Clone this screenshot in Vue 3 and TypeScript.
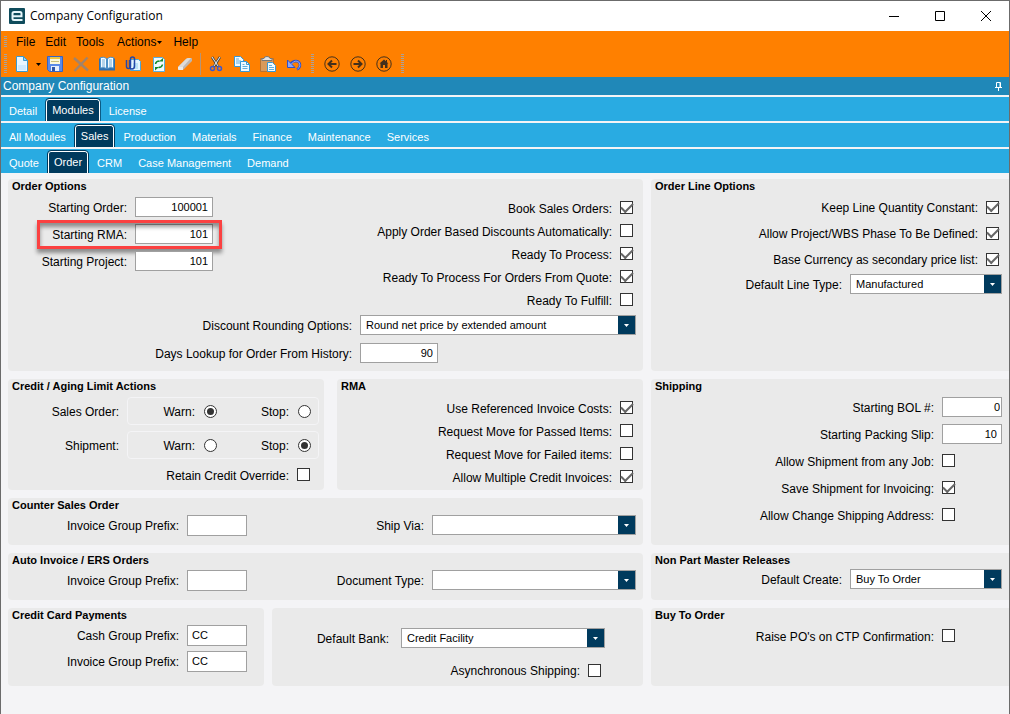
<script setup lang="ts">
import { ref, reactive } from 'vue'

interface Check {
  id: string
  label: string
  on: boolean
}

interface TabRow {
  name: string
  tabs: string[]
  active: string
}

const tabRows = reactive<TabRow[]>([
  { name: 'Section', tabs: ['Detail', 'Modules', 'License'], active: 'Modules' },
  {
    name: 'Module',
    tabs: ['All Modules', 'Sales', 'Production', 'Materials', 'Finance', 'Maintenance', 'Services'],
    active: 'Sales',
  },
  {
    name: 'Sales area',
    tabs: ['Quote', 'Order', 'CRM', 'Case Management', 'Demand'],
    active: 'Order',
  },
])

const starting = reactive([
  { id: 'start-order', label: 'Starting Order:', value: '100001', marked: false },
  { id: 'start-rma', label: 'Starting RMA:', value: '101', marked: true },
  { id: 'start-project', label: 'Starting Project:', value: '101', marked: false },
])

const orderChecks = reactive<Check[]>([
  { id: 'book', label: 'Book Sales Orders:', on: true },
  { id: 'discounts', label: 'Apply Order Based Discounts Automatically:', on: false },
  { id: 'ready', label: 'Ready To Process:', on: true },
  { id: 'ready-quote', label: 'Ready To Process For Orders From Quote:', on: true },
  { id: 'fulfill', label: 'Ready To Fulfill:', on: false },
])

const lineChecks = reactive<Check[]>([
  { id: 'quantity', label: 'Keep Line Quantity Constant:', on: true },
  { id: 'wbs', label: 'Allow Project/WBS Phase To Be Defined:', on: true },
  { id: 'currency', label: 'Base Currency as secondary price list:', on: true },
])

const rmaChecks = reactive<Check[]>([
  { id: 'costs', label: 'Use Referenced Invoice Costs:', on: true },
  { id: 'passed', label: 'Request Move for Passed Items:', on: false },
  { id: 'failed', label: 'Request Move for Failed items:', on: false },
  { id: 'multiple', label: 'Allow Multiple Credit Invoices:', on: true },
])

const shipChecks = reactive<Check[]>([
  { id: 'any-job', label: 'Allow Shipment from any Job:', on: false },
  { id: 'save-ship', label: 'Save Shipment for Invoicing:', on: true },
  { id: 'ship-address', label: 'Allow Change Shipping Address:', on: false },
])

const limits = reactive([
  { id: 'limit-order', label: 'Sales Order:', value: 'Warn' },
  { id: 'limit-shipment', label: 'Shipment:', value: 'Stop' },
])

const rounding = ref('Round net price by extended amount')
const daysLookup = ref('90')
const lineType = ref('Manufactured')
const bol = ref('0')
const packingSlip = ref('10')
const counterPrefix = ref('')
const shipVia = ref('')
const autoPrefix = ref('')
const documentType = ref('')
const defaultCreate = ref('Buy To Order')
const cashPrefix = ref('CC')
const invoicePrefix = ref('CC')
const bank = ref('Credit Facility')
const asynchronous = ref(false)
const retain = ref(false)
const raisePo = ref(false)
</script>

<template>
  <div class="window">
    <header class="titlebar">
      <svg class="logo" viewBox="0 0 16 16" aria-hidden="true">
        <rect width="16" height="16" rx="1" fill="#0f4c5c" />
        <path d="M13.500 12H5Q3.500 12 3.500 10.500v-5Q3.500 4 5 4h6q1.500 0 1.500 1.500V8.300H4" fill="none" stroke="#e6f6fa" stroke-width="2" />
      </svg>
      <h1>Company Configuration</h1>
      <div class="window-buttons">
        <button type="button" aria-label="Minimize">
          <svg viewBox="0 0 12 12"><path d="M1 6.5h10" /></svg>
        </button>
        <button type="button" aria-label="Maximize">
          <svg viewBox="0 0 12 12"><path d="M1.5 1.5h9v9h-9z" /></svg>
        </button>
        <button type="button" aria-label="Close">
          <svg viewBox="0 0 12 12"><path d="M1 1l10 10M11 1L1 11" /></svg>
        </button>
      </div>
    </header>

    <div class="commands">
      <nav class="menu" aria-label="Menu">
        <i class="grip"></i>
        <button type="button">File</button>
        <button type="button">Edit</button>
        <button type="button">Tools</button>
        <button type="button" class="with-caret">Actions<svg class="menu-caret" viewBox="0 0 5 3"><path d="M0 0h5L2.500 3z" /></svg></button>
        <button type="button">Help</button>
      </nav>
      <div class="toolbar" role="toolbar" aria-label="Standard">
        <i class="grip tall"></i>
        <button type="button" class="new" aria-label="New">
          <svg viewBox="0 0 16 16"><path d="M2.500 .5h7l4 4v11h-11z" fill="#e9f6ff" stroke="#3a9ad0" /><path d="M9.500 .5v4h4z" fill="#9fd2f2" stroke="#3a9ad0" /><path d="M4 9h8v5H4z" fill="#cfeaff" /></svg>
        </button>
        <button type="button" class="drop" aria-label="New options">
          <svg class="menu-caret" viewBox="0 0 5 3"><path d="M0 0h5L2.500 3z" /></svg>
        </button>
        <button type="button" aria-label="Save">
          <svg viewBox="0 0 16 16"><path d="M.5 .5h15v15h-13l-2-2z" fill="#5b8ae8" stroke="#3763c4" /><path d="M3 1h10v7H3z" fill="#fbf8dc" /><path d="M3 1h10v2H3z" fill="#f0c63c" /><path d="M4 5.500h8" stroke="#c9bf7c" /><path d="M4 10h8v5H4z" fill="#e8effb" /><path d="M5 11h3v4H5z" fill="#3156a6" /></svg>
        </button>
        <button type="button" aria-label="Delete">
          <svg viewBox="0 0 16 16"><path d="M1 2l14 12.500M14.500 1.500L1.500 15" fill="none" stroke="#a2836a" stroke-width="2.500" /></svg>
        </button>
        <button type="button" aria-label="Search">
          <svg viewBox="0 0 16 16"><path d="M0 2.500h16v12H0z" fill="#2f6fae" /><path d="M1.500 1.500Q5 .5 7.500 2.500v10Q5 11 1.500 12zM14.500 1.500Q11 .5 8.500 2.500v10Q11 11 14.500 12z" fill="#f4fbff" stroke="#4b91c8" /><path d="M3 4h3M3 6h3M3 8h3M3 10h3M10 4h3M10 6h3M10 8h3M10 10h3" stroke="#73acd6" /></svg>
        </button>
        <button type="button" aria-label="Attachments">
          <svg viewBox="0 0 16 16"><path d="M5.500 3.500h8l2 2v9h-10z" fill="#e4f5ff" stroke="#4ba7d8" /><path d="M8 8h5M8 10h5M8 12h5" stroke="#93cdec" /><path d="M1.500 4v6.500q0 2 2 2t2-2V3q0-2 2-2t2 2v7q0 3-2.500 3T4.500 10V4" fill="none" stroke="#2447a8" stroke-width="1.500" /></svg>
        </button>
        <button type="button" aria-label="Refresh">
          <svg viewBox="0 0 16 16"><path d="M2.500 1.500h9l2 2v12h-11z" fill="#f1faff" stroke="#5aaede" /><path d="M4.500 8Q5 5 8.500 5" fill="none" stroke="#128a2c" stroke-width="1.500" /><path d="M8 5.500h4v-3.500z" fill="#128a2c" /><path d="M11.500 8.500Q11 11.500 7.500 11.500" fill="none" stroke="#128a2c" stroke-width="1.500" /><path d="M8 11H4v3.500z" fill="#128a2c" /></svg>
        </button>
        <button type="button" aria-label="Clear">
          <svg viewBox="0 0 16 16"><path d="M1 11l8-8q1-1 2.500-1H14q1 0 1 1v2L7 13q-1 1-2 1H2q-1 0-1-1z" fill="#bdb6b0" /><path d="M1 11l8-8q1-1 2.500-1H14L6 11z" fill="#dedbd8" /><path d="M1 11h5v3H2q-1 0-1-1z" fill="#eceae8" /></svg>
        </button>
        <i class="divider"></i>
        <button type="button" aria-label="Cut">
          <svg viewBox="0 0 16 16"><path d="M4 1l6 9.500M12 1L6 10.500" fill="none" stroke="#4a4a4a" stroke-width="2.500" /><path d="M4 1l6 9M12 1L6 10" fill="none" stroke="#e9edf2" /><ellipse cx="4.500" cy="12.500" rx="2" ry="2" fill="#ff8000" stroke="#3a58d0" stroke-width="1.500" /><ellipse cx="11.500" cy="12.500" rx="2" ry="2" fill="#ff8000" stroke="#3a58d0" stroke-width="1.500" /></svg>
        </button>
        <button type="button" aria-label="Copy">
          <svg viewBox="0 0 16 16"><path d="M.5 .5h6l3 3v7h-9z" fill="#f1faff" stroke="#3898d4" /><path d="M2 3h3M2 5h5M2 7h5" stroke="#61aede" /><path d="M6.500 5.500h6l3 3v7h-9z" fill="#f1faff" stroke="#3898d4" /><path d="M12.500 5.500v3h3" fill="none" stroke="#3898d4" /><path d="M8.500 8.500h2M8.500 10.500h5M8.500 12.500h5" stroke="#61aede" /></svg>
        </button>
        <button type="button" aria-label="Paste">
          <svg viewBox="0 0 16 16"><path d="M.5 2.500h13v13H.5z" fill="#d99a5c" stroke="#b87333" /><path d="M2 4.500h10v-2h-2q0-2-3-2t-3 2H2z" fill="#e3e3e3" stroke="#777" /><path d="M7.500 6.500h5l3 3v6h-8z" fill="#f1faff" stroke="#3898d4" /><path d="M9 9.500h3M9 11.500h5M9 13.500h5" stroke="#61aede" /></svg>
        </button>
        <button type="button" aria-label="Undo">
          <svg viewBox="0 0 16 16"><path d="M3.500 9Q6 5 10 5q4 .5 4 4 0 3-3 4.500" fill="none" stroke="#2f50c8" stroke-width="2.500" /><path d="M1.500 4v7.500H9z" fill="#8fa6f4" stroke="#2f50c8" /><path d="M5 8.500q2.500-3.500 5-3.500 4 .5 4 4 0 2.500-2.500 4" fill="none" stroke="#8fa6f4" /></svg>
        </button>
        <i class="grip tall mid"></i>
        <button type="button" aria-label="Back">
          <svg class="round" viewBox="0 0 16 16"><circle cx="8" cy="8" r="7.200" /><path d="M12.500 8H4.500M8 4.500L4.500 8 8 11.500" stroke-width="2" /></svg>
        </button>
        <button type="button" aria-label="Forward">
          <svg class="round" viewBox="0 0 16 16"><circle cx="8" cy="8" r="7.200" /><path d="M3.500 8h8M8 4.500L11.500 8 8 11.500" stroke-width="2" /></svg>
        </button>
        <button type="button" aria-label="Home">
          <svg class="round" viewBox="0 0 16 16"><circle cx="8" cy="8" r="7.200" /><path d="M8 3.500L3.500 7.500h1v4.500H7V9h2v3h2.500V7.500h1L11 6.200V4h-1v1.300z" fill="#44301c" stroke="none" /></svg>
        </button>
        <i class="grip tall mid"></i>
      </div>
    </div>

    <div class="caption">
      <span>Company Configuration</span>
      <button type="button" aria-label="Pin">
        <svg viewBox="0 0 8 9"><path d="M1.500 .5h4v5h-4zM0 5.500h7M3.500 6v3M5 1v4" /></svg>
      </button>
    </div>

    <div v-for="row in tabRows" :key="row.name" class="tabs" role="tablist" :aria-label="row.name">
      <button
        v-for="tab in row.tabs"
        :key="tab"
        type="button"
        role="tab"
        class="tab"
        :class="{ active: tab === row.active }"
        :aria-selected="tab === row.active"
        @click="row.active = tab"
      >
        {{ tab }}
      </button>
    </div>

    <main class="sheet">
      <section class="panel">
        <h2>Order Options</h2>
        <div class="order-top">
          <div>
            <div v-for="f in starting" :key="f.id" class="field-row" :class="{ marked: f.marked }">
              <label :for="f.id">{{ f.label }}</label>
              <input :id="f.id" v-model="f.value" type="text" class="number" />
            </div>
          </div>
          <div class="checks order-checks">
            <div v-for="c in orderChecks" :key="c.id" class="check-row">
              <label :for="c.id">{{ c.label }}</label>
              <input :id="c.id" v-model="c.on" type="checkbox" />
            </div>
          </div>
        </div>
        <div class="order-bottom">
          <label for="rounding">Discount Rounding Options:</label>
          <span class="combo">
            <select id="rounding" v-model="rounding"><option>Round net price by extended amount</option></select>
            <svg viewBox="0 0 17 18"><path d="M6 8h5L8.500 11z" /></svg>
          </span>
          <label for="days">Days Lookup for Order From History:</label>
          <input id="days" v-model="daysLookup" type="text" class="number" />
        </div>
      </section>

      <section class="panel side">
        <h2>Order Line Options</h2>
        <div class="checks line-checks">
          <div v-for="c in lineChecks" :key="c.id" class="check-row">
            <label :for="c.id">{{ c.label }}</label>
            <input :id="c.id" v-model="c.on" type="checkbox" />
          </div>
        </div>
        <div class="combo-row">
          <label for="line-type">Default Line Type:</label>
          <span class="combo">
            <select id="line-type" v-model="lineType"><option>Manufactured</option></select>
            <svg viewBox="0 0 17 18"><path d="M6 8h5L8.500 11z" /></svg>
          </span>
        </div>
      </section>

      <div class="pair credit-pair">
        <section class="panel">
          <h2>Credit / Aging Limit Actions</h2>
          <div class="limits">
            <div v-for="l in limits" :key="l.id" class="limit-row">
              <span :id="l.id" class="limit-name">{{ l.label }}</span>
              <div class="radios" role="radiogroup" :aria-labelledby="l.id">
                <template v-for="choice in ['Warn', 'Stop']" :key="choice">
                  <label :for="l.id + choice">{{ choice }}:</label>
                  <input :id="l.id + choice" v-model="l.value" type="radio" :name="l.id" :value="choice" />
                </template>
              </div>
            </div>
            <div class="check-row retain">
              <label for="retain">Retain Credit Override:</label>
              <input id="retain" v-model="retain" type="checkbox" />
            </div>
          </div>
        </section>
        <section class="panel">
          <h2>RMA</h2>
          <div class="checks rma-checks">
            <div v-for="c in rmaChecks" :key="c.id" class="check-row">
              <label :for="c.id">{{ c.label }}</label>
              <input :id="c.id" v-model="c.on" type="checkbox" />
            </div>
          </div>
        </section>
      </div>

      <section class="panel side tall-panel">
        <h2>Shipping</h2>
        <div class="ship-grid">
          <label for="bol">Starting BOL #:</label>
          <input id="bol" v-model="bol" type="text" class="number snug" />
          <label for="slip">Starting Packing Slip:</label>
          <input id="slip" v-model="packingSlip" type="text" class="number" />
          <template v-for="c in shipChecks" :key="c.id">
            <label :for="c.id">{{ c.label }}</label>
            <input :id="c.id" v-model="c.on" type="checkbox" />
          </template>
        </div>
      </section>

      <section class="panel">
        <h2>Counter Sales Order</h2>
        <div class="prefix-row">
          <label for="counter-prefix">Invoice Group Prefix:</label>
          <input id="counter-prefix" v-model="counterPrefix" type="text" class="prefix" />
          <label for="ship-via">Ship Via:</label>
          <span class="combo">
            <select id="ship-via" v-model="shipVia"><option></option></select>
            <svg viewBox="0 0 17 18"><path d="M6 8h5L8.500 11z" /></svg>
          </span>
        </div>
      </section>

      <section class="panel">
        <h2>Auto Invoice / ERS Orders</h2>
        <div class="prefix-row">
          <label for="auto-prefix">Invoice Group Prefix:</label>
          <input id="auto-prefix" v-model="autoPrefix" type="text" class="prefix" />
          <label for="document-type">Document Type:</label>
          <span class="combo">
            <select id="document-type" v-model="documentType"><option></option></select>
            <svg viewBox="0 0 17 18"><path d="M6 8h5L8.500 11z" /></svg>
          </span>
        </div>
      </section>

      <section class="panel side">
        <h2>Non Part Master Releases</h2>
        <div class="combo-row">
          <label for="default-create">Default Create:</label>
          <span class="combo">
            <select id="default-create" v-model="defaultCreate"><option>Buy To Order</option></select>
            <svg viewBox="0 0 17 18"><path d="M6 8h5L8.500 11z" /></svg>
          </span>
        </div>
      </section>

      <div class="pair card-pair">
        <section class="panel">
          <h2>Credit Card Payments</h2>
          <div class="prefix-row">
            <label for="cash-prefix">Cash Group Prefix:</label>
            <input id="cash-prefix" v-model="cashPrefix" type="text" class="prefix" />
          </div>
          <div class="prefix-row">
            <label for="invoice-prefix">Invoice Group Prefix:</label>
            <input id="invoice-prefix" v-model="invoicePrefix" type="text" class="prefix" />
          </div>
        </section>
        <section class="panel bank">
          <div class="bank-row">
            <label for="bank">Default Bank:</label>
            <span class="combo">
              <select id="bank" v-model="bank"><option>Credit Facility</option></select>
              <svg viewBox="0 0 17 18"><path d="M6 8h5L8.500 11z" /></svg>
            </span>
          </div>
          <div class="check-row">
            <label for="async">Asynchronous Shipping:</label>
            <input id="async" v-model="asynchronous" type="checkbox" />
          </div>
        </section>
      </div>

      <section class="panel side">
        <h2>Buy To Order</h2>
        <div class="ship-grid">
          <label for="raise-po">Raise PO's on CTP Confirmation:</label>
          <input id="raise-po" v-model="raisePo" type="checkbox" />
        </div>
      </section>
    </main>
  </div>
</template>

<style>
body {
  margin: 0;
  background: #f4f4f6;
}
</style>

<style scoped>
* {
  box-sizing: border-box;
}

.window {
  display: flex;
  flex-direction: column;
  min-height: 100vh;
  border: 1px solid #6b6b6b;
  border-bottom: 0;
  background: #f4f4f6;
  color: #000;
  font: 12px/14px "Liberation Sans", Arial, sans-serif;
  white-space: nowrap;
}

button {
  margin: 0;
  padding: 0;
  border: 0;
  background: none;
  color: inherit;
  font: inherit;
}

svg {
  display: block;
}

/* Title bar */
.titlebar {
  display: flex;
  align-items: center;
  height: 30px;
  padding-left: 8px;
  background: #fff;
}

.logo {
  width: 16px;
  height: 16px;
}

h1 {
  flex: 1;
  margin: 0 0 0 5px;
  font: 12px/16px "Open Sans", "Noto Sans", sans-serif;
}

.window-buttons {
  display: flex;
}

.window-buttons button {
  display: grid;
  place-items: center;
  width: 46px;
  height: 30px;
}

.window-buttons svg {
  width: 12px;
  height: 12px;
  fill: none;
  stroke: #000;
}

/* Menu and toolbar */
.commands {
  height: 46px;
  background: #ff8000;
}

.menu,
.toolbar {
  display: flex;
  align-items: center;
  padding-left: 3px;
}

.menu {
  height: 22px;
}

.menu button {
  display: flex;
  align-items: center;
  padding: 0 5px;
}

.menu .with-caret {
  padding: 0 6px 0 8px;
}

.menu .grip {
  margin-right: 4px;
}

.menu-caret {
  width: 5px;
  height: 3px;
  margin-left: 1px;
  fill: #000;
}

.toolbar {
  height: 22px;
}

.toolbar button {
  display: grid;
  place-items: center;
  width: 26px;
  height: 22px;
}

.toolbar .new {
  width: 24px;
  margin-left: 3px;
}

.toolbar .drop {
  width: 8px;
}

.toolbar svg:not(.menu-caret) {
  width: 16px;
  height: 16px;
}

.toolbar .menu-caret {
  margin: 0;
}

.grip {
  width: 3px;
  height: 12px;
  background: repeating-linear-gradient(#a9a29a 0 1px, #ff8000 1px 2px);
}

.grip.tall {
  height: 20px;
}

.grip.mid {
  margin: 0 5px 0 4px;
}

.divider {
  width: 1px;
  height: 22px;
  margin: 0 2px;
  background: #b3957a;
}

.round {
  fill: none;
  stroke: #44301c;
}

/* Caption */
.caption {
  display: flex;
  align-items: center;
  justify-content: space-between;
  height: 18px;
  padding: 0 6px 0 2px;
  background: #2088b8;
  color: #fff;
}

.caption svg {
  width: 8px;
  height: 9px;
  fill: none;
  stroke: #fff;
}

/* Tabs */
.tabs {
  display: flex;
  align-items: flex-end;
  height: 24px;
  margin-top: 2px;
  background: #29abe2;
  color: #fff;
  font-size: 11px;
}

.tab {
  height: 23px;
  padding: 2px 8px 0;
}

.tab.active {
  height: 22px;
  margin: 0 1px;
  padding: 0 5px 2px;
  border: 1px solid #fff;
  border-bottom: 0;
  border-radius: 3px 3px 0 0;
  outline: 1px solid #003a5d;
  background: #003a5d;
  clip-path: inset(-1px -1px 0);
}

/* Sheet */
.sheet {
  display: grid;
  grid-template-columns: 635fr 358fr;
  gap: 8px;
  padding: 6px 0 28px 7px;
}

.panel {
  padding: 0 7px 0 4px;
  border-radius: 4px;
  background: #eaeaea;
}

.side {
  border-radius: 4px 0 0 4px;
}

.tall-panel {
  grid-row: span 2;
}

.pair {
  display: grid;
}

.credit-pair {
  grid-template-columns: 316fr 306fr;
  gap: 13px;
}

.card-pair {
  grid-template-columns: 256fr 371fr;
  gap: 8px;
}

h2 {
  margin: 0;
  font-size: 11px;
  line-height: 14px;
}

label,
.limit-name {
  padding-top: 2px;
  text-align: right;
}

/* Controls */
input[type='text'],
select {
  height: 20px;
  margin: 0;
  border: 1px solid #a0a0a0;
  border-radius: 0;
  background: #fff;
  color: #000;
  font: 11px/14px "Liberation Sans", Arial, sans-serif;
}

input[type='text'] {
  padding: 0 4px;
}

.number {
  width: 78px;
  text-align: right;
}

input[type='text'].snug {
  padding-right: 1px;
}

input[type='text'].prefix {
  width: 60px;
  height: 21px;
}

input[type='checkbox'],
input[type='radio'] {
  display: grid;
  flex: none;
  place-items: center;
  width: 13px;
  height: 13px;
  margin: 0;
  border: 1px solid #333;
  background: #fff;
  appearance: none;
}

input[type='checkbox']:checked::after {
  content: '';
  width: 10px;
  height: 5px;
  margin-top: -3px;
  border: solid #666;
  border-width: 0 0 2px 2px;
  transform: rotate(-45deg);
}

input[type='radio'] {
  border-radius: 50%;
}

input[type='radio']:checked::after {
  content: '';
  width: 7px;
  height: 7px;
  border-radius: 50%;
  background: #333;
}

.combo {
  position: relative;
  display: block;
  min-width: 0;
}

.combo select {
  display: block;
  width: 100%;
  padding: 0 20px 0 5px;
  appearance: none;
}

.combo svg {
  position: absolute;
  top: 1px;
  right: 1px;
  width: 17px;
  height: 18px;
  background: #003a5d;
  fill: #fff;
  pointer-events: none;
}

/* Rows */
.field-row {
  position: relative;
  display: grid;
  grid-template-columns: 115px 78px;
  align-items: center;
  column-gap: 8px;
  height: 27px;
}

.marked::after {
  content: '';
  position: absolute;
  inset: 0 -9px -2px 25px;
  border: 3px solid #fb4141;
  box-shadow: 0 4px 4px rgba(0, 0, 0, 0.4), inset 0 4px 4px rgba(0, 0, 0, 0.4);
  pointer-events: none;
}

.order-top {
  display: flex;
  justify-content: space-between;
}

.check-row {
  display: flex;
  align-items: center;
  justify-content: flex-end;
  gap: 8px;
  height: 23px;
}

.checks {
  padding: 3px 3px 0 0;
}

.line-checks {
  padding-top: 1px;
}

.line-checks .check-row {
  height: 26px;
}

.order-bottom {
  display: grid;
  grid-template-columns: 1fr 276px;
  grid-auto-rows: 28px;
  align-items: center;
  column-gap: 8px;
  padding: 0 0 4px;
}

.combo-row {
  display: grid;
  grid-template-columns: 1fr 152px;
  align-items: center;
  column-gap: 8px;
  height: 24px;
}

.limits {
  display: grid;
  gap: 6px;
  padding: 4px 0 6px;
}

.limit-row {
  display: grid;
  grid-template-columns: 1fr 192px;
  align-items: center;
  column-gap: 8px;
  margin-right: -2px;
}

.radios {
  display: grid;
  grid-template-columns: 1fr 13px 63px 13px;
  align-items: center;
  column-gap: 9px;
  height: 28px;
  padding-right: 7px;
  border: 1px solid #f4f4f6;
  border-radius: 4px;
}

.retain {
  height: 19px;
  padding-right: 7px;
}

.rma-checks {
  padding-bottom: 2px;
}

.ship-grid {
  display: grid;
  grid-template-columns: 1fr 60px;
  grid-auto-rows: 27px;
  align-items: center;
  column-gap: 8px;
}

.ship-grid .number {
  width: 60px;
}

.prefix-row {
  display: grid;
  grid-template-columns: 167px 60px 1fr 204px;
  align-items: center;
  column-gap: 8px;
  height: 26px;
}

.prefix-row:last-child {
  margin-bottom: 7px;
}

.card-pair .prefix-row {
  grid-template-columns: 167px 60px;
}

.card-pair .prefix-row:last-child {
  margin-bottom: 12px;
}

.bank {
  padding: 14px 38px 0 4px;
}

.bank-row {
  display: grid;
  grid-template-columns: 1fr 204px;
  align-items: center;
  column-gap: 12px;
  height: 32px;
}

.bank .check-row {
  height: 32px;
  padding-right: 4px;
}
</style>
